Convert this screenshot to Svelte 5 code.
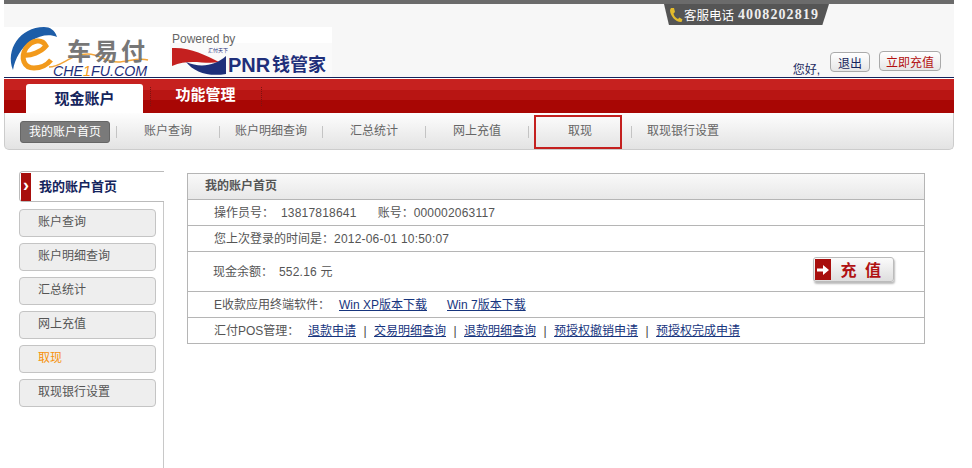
<script lang="ts">
  const subNav = ["我的账户首页", "账户查询", "账户明细查询", "汇总统计", "网上充值", "取现", "取现银行设置"];
  const sideNav = ["账户查询", "账户明细查询", "汇总统计", "网上充值", "取现", "取现银行设置"];
  const posLinks = ["退款申请", "交易明细查询", "退款明细查询", "预授权撤销申请", "预授权完成申请"];
</script>

<div class="page">
  <header class="header">
    <div class="hotline-row">
      <div class="hotline">
        <svg class="phone" width="14" height="16" viewBox="0 0 14 16">
          <path d="M2 1 L5 1 L6 5 L4.5 6.5 C5 9 6.5 11 9 12 L10.5 10.5 L13.5 12.5 L12.5 15 C7 15.5 1 9 1 3 Z" fill="#e3bb2c" />
        </svg>
        <span class="hotline-label">客服电话</span>
        <span class="hotline-num">4008202819</span>
      </div>
    </div>
    <div class="brand-row">
      <svg class="logos" width="328" height="50" viewBox="4 27 328 50">
        <rect x="4" y="27" width="328" height="50" fill="#fff" />
        <rect x="170" y="43" width="162" height="34" fill="#fafafa" />
        <path d="M13 70 C5 50 20 27 44 27 C50 27 55 30 57 37 C50 34 40 35 31 41 C21 48 15 58 13 70 Z" fill="#1d5da8" />
        <path d="M23 55 C31 56 41 52 46 46 C42 38 32 40 26 48 C20 58 24 68 34 68 C42 68 47 65 51 60" fill="none" stroke="#f29a1c" stroke-width="5" />
        <path d="M49 67 C62 67 70 54 88 54 C100 54 104 62 118 62 C128 62 138 57 148 60" fill="none" stroke="#f2a53a" stroke-width="1.5" />
        <text x="67" y="60" class="logo-cn">车易付</text>
        <text x="53" y="76" class="logo-en">CHE<tspan fill="#f29a1c">1</tspan>FU.COM</text>
        <text x="172" y="43" class="powered">Powered by</text>
        <path d="M172 48 C190 47 205 55 219 62 C205 65 190 58 172 66 Z" fill="#c4201f" />
        <path d="M186 62 C200 68 215 66 226 56 L226 74 C208 77 194 72 186 62 Z" fill="#1f2f7a" />
        <text x="208" y="52" class="tiny">汇付天下</text>
        <text x="228" y="72" class="pnr">PNR</text>
        <text x="272" y="71" class="pnr-cn">钱管家</text>
      </svg>
      <div class="user">
        <span class="hello">您好,</span>
        <button class="btn-small logout">退出</button>
        <button class="btn-small charge">立即充值</button>
      </div>
    </div>
  </header>

  <nav class="main-nav">
    <a class="tab active">现金账户</a>
    <a class="tab">功能管理</a>
  </nav>

  <nav class="sub-nav">
    {#each subNav as item, i}
      <div class="sub-item" class:marked={item === "取现"}>
        <span class:on={i === 0}>{item}</span>
      </div>
      {#if i < subNav.length - 1}<i class="sep"></i>{/if}
    {/each}
  </nav>

  <div class="content">
    <aside class="side">
      <div class="side-head"><b class="side-arrow">›</b><span class="side-title">我的账户首页</span></div>
      <div class="side-list">
        {#each sideNav as item}
          <a class="side-item" class:current={item === "取现"}>{item}</a>
        {/each}
      </div>
    </aside>

    <section class="panel">
      <h2>我的账户首页</h2>
      <div class="row">
        <span class="gap-l">操作员号：</span><span class="num">13817818641</span><span class="acct">账号：</span><span class="num">000002063117</span>
      </div>
      <div class="row">您上次登录的时间是：<span class="num">2012-06-01 10:50:07</span></div>
      <div class="row tall">
        <span class="gap-m">现金余额：</span><span class="num">552.16 元</span>
        <button class="recharge">
          <span class="recharge-icon">
            <svg width="12" height="12" viewBox="0 0 12 12"><path d="M0 4.5 H6 V1 L12 6 L6 11 V7.5 H0 Z" fill="#fff" /></svg>
          </span>
          <span class="recharge-text">充 值</span>
        </button>
      </div>
      <div class="row">
        <span class="gap-w">E收款应用终端软件：</span><a class="link xp">Win XP版本下载</a><a class="link">Win 7版本下载</a>
      </div>
      <div class="row">
        <span class="gap-p">汇付POS管理：</span>
        {#each posLinks as link, i}
          {#if i > 0}<span class="bar">|</span>{/if}<a class="link">{link}</a>
        {/each}
      </div>
    </section>
  </div>
</div>

<style>
  :global(body) {
    margin: 0;
    background: #fff;
    height: 468px;
    overflow: hidden;
  }
  .page {
    width: 950px;
    margin-left: 4px;
    font-family: "Liberation Sans", "Noto Sans CJK SC", sans-serif;
    font-size: 12px;
    color: #555;
  }
  .header {
    height: 77px;
    box-sizing: border-box;
    background: #f7f7f7;
    border-top: 4px solid #6b6b6b;
  }
  .hotline-row {
    display: flex;
    height: 21px;
    padding-left: 660px;
  }
  .hotline {
    width: 165px;
    height: 21px;
    box-sizing: border-box;
    display: flex;
    align-items: center;
    padding-left: 5px;
    background: #555;
    color: #fff;
    clip-path: polygon(0 0, 100% 0, 96% 100%, 3% 100%);
    border-radius: 0 0 5px 5px;
  }
  .phone {
    flex-shrink: 0;
    margin-right: 1px;
  }
  .hotline-label {
    font-size: 12.5px;
  }
  .hotline-num {
    margin-left: 4px;
    font-family: "Liberation Serif", serif;
    font-weight: bold;
    font-size: 14px;
    letter-spacing: 1.1px;
    color: #eee;
  }
  .brand-row {
    display: flex;
    justify-content: space-between;
    margin-top: 2px;
    height: 50px;
  }
  .logos {
    display: block;
  }
  .logo-cn {
    font: bold 24px "Noto Sans CJK SC", sans-serif;
    letter-spacing: 3px;
    fill: #777;
  }
  .logo-en {
    font: italic 14.25px "Liberation Sans", sans-serif;
    fill: #1f2f7a;
  }
  .powered {
    font: 12px "Liberation Sans", sans-serif;
    fill: #666;
  }
  .tiny {
    font: 5px "Noto Sans CJK SC", sans-serif;
    fill: #1f2f7a;
  }
  .pnr {
    font: bold 20px "Liberation Sans", sans-serif;
    fill: #1f2f7a;
  }
  .pnr-cn {
    font: bold 18px "Noto Sans CJK SC", sans-serif;
    fill: #1f2f7a;
  }
  .user {
    display: flex;
    align-items: flex-start;
    padding-right: 13px;
    padding-top: 24px;
  }
  .hello {
    color: #1c2a5e;
    margin-top: 9px;
    margin-right: 10px;
  }
  .btn-small {
    height: 20px;
    padding: 0;
    font: 12px "Noto Sans CJK SC", sans-serif;
    background: linear-gradient(#fff, #e6e6e6);
    border: 1px solid #aaa;
    border-radius: 4px;
  }
  .logout {
    width: 40px;
    margin-top: 1px;
    margin-right: 9px;
    color: #14245c;
  }
  .charge {
    width: 62px;
    color: #b30f0f;
  }
  .main-nav {
    height: 36px;
    box-sizing: border-box;
    display: flex;
    align-items: flex-start;
    padding-left: 22px;
    border-top: 1px solid #14245c;
    background:
      linear-gradient(#fff, #fff) top / 100% 1px no-repeat,
      linear-gradient(#c6211f 0 12px, #b81513 12px 22px, #a80604 22px);
  }
  .tab {
    width: 117px;
    height: 29px;
    margin-top: 6px;
    display: flex;
    align-items: center;
    justify-content: center;
    box-sizing: border-box;
    font: bold 15px/1 "Noto Sans CJK SC", sans-serif;
    border-radius: 3px 3px 0 0;
  }
  .tab.active {
    background: #fff;
    color: #14245c;
    padding-bottom: 3px;
    margin-right: 7px;
  }
  .tab:not(.active) {
    width: 112px;
    height: 19px;
    margin-top: 9px;
    padding-bottom: 6px;
    padding-right: 1px;
    color: #fff;
    border-radius: 0;
    border-left: 1px dotted #7e1210;
    border-right: 1px dotted #7e1210;
  }
  .sub-nav {
    height: 37px;
    box-sizing: border-box;
    display: flex;
    align-items: center;
    padding-left: 9px;
    padding-top: 2px;
    background: linear-gradient(#fdfdfd, #e3e3e3);
    border: 1px solid #ccc;
    border-top: 0;
    border-radius: 0 0 5px 5px;
    color: #666;
  }
  .sub-item {
    position: relative;
    width: 102px;
    display: flex;
    justify-content: center;
  }
  .sub-item span {
    width: 90px;
    height: 22px;
    line-height: 21px;
    text-align: center;
  }
  .sub-item .on {
    background: #7a7a7a;
    color: #fff;
    border: 1px solid #666;
    box-sizing: border-box;
    border-radius: 3px;
  }
  .marked::after {
    content: "";
    position: absolute;
    left: 5px;
    top: -6px;
    width: 88px;
    height: 34px;
    box-sizing: border-box;
    border: 2px solid #c4201f;
  }
  .sep {
    width: 1px;
    height: 12px;
    background: #c4c4c4;
  }
  .content {
    display: flex;
    margin-top: 21px;
    padding-left: 15px;
  }
  .side {
    width: 145px;
    height: 300px;
    flex-shrink: 0;
  }
  .side-head {
    height: 31px;
    box-sizing: border-box;
    display: flex;
    align-items: center;
    border: 1px solid #bbb;
    border-right: 0;
    border-radius: 4px 0 0 4px;
    font-size: 13px;
    font-weight: bold;
    color: #14245c;
  }
  .side-title {
    margin-bottom: 3px;
  }
  .side-arrow {
    width: 10px;
    height: 28px;
    margin-left: 1px;
    margin-right: 8px;
    background: #a80f0d;
    color: #fff;
    font: bold 18px/25px "Liberation Sans", sans-serif;
    text-align: center;
  }
  .side-list {
    display: flex;
    flex-direction: column;
    gap: 6px;
    height: 267px;
    padding-top: 7px;
    border-right: 1px solid #c8c8c8;
  }
  .side-item {
    width: 137px;
    height: 28px;
    box-sizing: border-box;
    padding-left: 18px;
    line-height: 24px;
    background: #eee;
    border: 1px solid #c4c4c4;
    border-radius: 4px;
  }
  .side-item.current {
    color: #f7920a;
  }
  .panel {
    width: 738px;
    height: 171px;
    box-sizing: border-box;
    margin-left: 23px;
    margin-top: 2px;
    border: 1px solid #b5b5b5;
  }
  h2 {
    margin: 0;
    height: 26px;
    box-sizing: border-box;
    padding-left: 17px;
    line-height: 24px;
    font-size: 12px;
    font-weight: bold;
    color: #555;
    background: linear-gradient(#f9f9f9, #e8e8e8);
    border-bottom: 1px solid #b5b5b5;
  }
  .row {
    height: 26px;
    box-sizing: border-box;
    display: flex;
    align-items: baseline;
    padding-left: 26px;
    padding-top: 3px;
    border-bottom: 1px solid #b5b5b5;
    white-space: pre;
  }
  .row:last-child {
    border-bottom: 0;
  }
  .row.tall {
    height: 40px;
    padding-left: 25px;
    padding-top: 10px;
  }
  .num {
    letter-spacing: 0.2px;
  }
  .gap-l {
    width: 67px;
  }
  .acct {
    margin-left: 21px;
    width: 36px;
  }
  .gap-m {
    width: 66px;
  }
  .gap-w {
    width: 125px;
  }
  .gap-p {
    width: 94px;
  }
  .link {
    color: #17357e;
    text-decoration: underline;
  }
  .xp {
    margin-right: 20px;
  }
  .bar {
    width: 18px;
    text-align: center;
    color: #444;
  }
  .recharge {
    align-self: flex-start;
    margin-left: auto;
    margin-right: 30px;
    margin-top: -5px;
    width: 81px;
    height: 25px;
    padding: 0;
    display: flex;
    align-items: stretch;
    background: linear-gradient(#fbfbfb, #dedede);
    border: 1px solid #bbb;
    border-radius: 3px;
    box-shadow: 1px 2px 2px #bbb;
  }
  .recharge-icon {
    width: 16px;
    margin: 1px 0 1px 1px;
    display: flex;
    align-items: center;
    justify-content: center;
    background: #a80f0d;
  }
  .recharge-text {
    flex: 1;
    font: bold 16px/23px "Noto Sans CJK SC", sans-serif;
    color: #b01212;
    letter-spacing: 2.5px;
    text-align: center;
  }
</style>
